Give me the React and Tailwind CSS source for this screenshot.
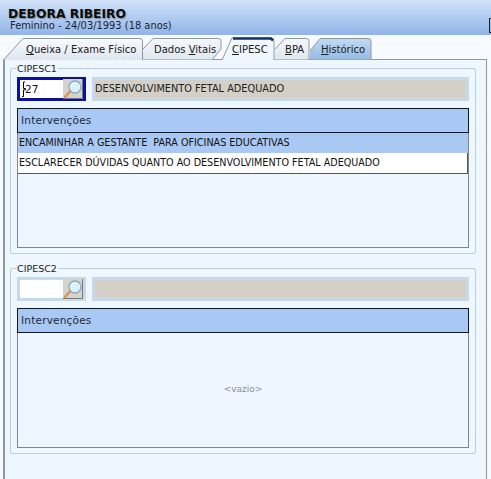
import { useId } from 'react';

const font = { fontFamily: '"DejaVu Sans", Verdana, sans-serif' };

function Tab({ width, path, from, to, active, textClass, children }) {
  const id = useId();
  return (
    <div className={`relative h-[23px] shrink-0 ${width}`}>
      <svg className="absolute inset-0 w-full h-full">
        <defs>
          <linearGradient id={id} x1="0" y1="0" x2="0" y2="1">
            <stop offset="0" stopColor={from} />
            <stop offset="1" stopColor={to} />
          </linearGradient>
        </defs>
        <path d={path} fill={`url(#${id})`} stroke="#8f989f" />
        {active && <path d="M11 1.5 H49 L51 3.5" fill="none" stroke="#12326f" strokeWidth="2.5" />}
      </svg>
      <span className={`absolute top-[6px] text-[10px] leading-[14px] whitespace-nowrap text-[#202020] ${textClass}`}>
        {children}
      </span>
    </div>
  );
}

function Lens() {
  return (
    <svg width="20" height="20" viewBox="0 0 20 20">
      <rect width="20" height="20" fill="#d6d3cb" />
      <path d="M19.5 0 V19.5 H0" fill="none" stroke="#77756f" />
      <path d="M2 18 L7.5 12" stroke="#d99a5a" strokeWidth="2.6" strokeLinecap="round" />
      <circle cx="12" cy="8" r="6" fill="#d8f1fa" stroke="#8fa9b8" strokeWidth="1.3" />
      <path d="M8.5 7 A3.7 3.7 0 0 1 11.5 4" fill="none" stroke="#fff" strokeWidth="1.2" />
    </svg>
  );
}

function Lookup({ focused, code, desc }) {
  return (
    <div className="flex gap-[6px] h-[24px]">
      <div className={`relative flex w-[69px] items-center border-[3px] ${focused ? 'border-[#0b10a0]' : 'border-[#c5d9ea]'} bg-white`}>
        <span className="flex-1 pl-[5px] text-[10.5px] leading-[14px] text-[#111]">{code}</span>
        <Lens />
        {focused && (
          <svg className="absolute left-[1px] top-[1px]" width="6" height="17" viewBox="0 0 6 17">
            <path d="M2.5 1 H4 M2.5 1 V7.5 H4.5 V9 H2.5 V15.5 H1" fill="none" stroke="#000" strokeWidth="1" />
          </svg>
        )}
      </div>
      <div className="flex flex-1 items-center border-[3px] border-[#c5d9ea] bg-[#d4d0c8] text-[9.75px] text-[#202020]">
        {desc}
      </div>
    </div>
  );
}

function Group({ title, className, children }) {
  return (
    <div className={`relative border border-[#b7d0df] rounded-[2px] px-[6px] ${className}`}>
      <span className="absolute left-[5px] top-[-7px] bg-[#eef6ff] px-[1px] text-[9.5px] leading-[13px] text-[#202020]">
        {title}
      </span>
      {children}
    </div>
  );
}

function Table({ children }) {
  return (
    <div className="flex flex-col h-[140px] mt-[7px] border-l border-r border-b border-[#7f868c]">
      <div className="h-[25px] -mx-[1px] flex items-center border border-[#101820] bg-[#a9c8f3] pl-[3px] text-[10.5px] text-[#1c2a3a] tracking-[0.2px]">
        Intervenções
      </div>
      {children}
    </div>
  );
}

export default function App() {
  return (
    <div className="w-[491px] h-[479px] overflow-hidden bg-[#f7fbff] relative" style={font}>
      <div className="relative h-[35px] bg-gradient-to-b from-[#d3e3f9] to-[#8fb4e8] pl-[8px] pt-[7px]">
        <h1 className="text-[12.3px] leading-[14px] font-bold text-[#0a0a0a] [text-shadow:1px_1px_1px_#7f8aa0]">DEBORA RIBEIRO</h1>
        <p className="ml-[2px] -mt-[1px] text-[9.9px] leading-[11px] text-[#1c2430]">Feminino - 24/03/1993 (18 anos)</p>
        <div className="absolute right-0 top-[18px] h-[15px] w-[2px] border border-r-0 border-[#222]" />
      </div>

      <div className="flex pl-[3px] pt-[2px] h-[24px]">
        <Tab width="w-[140px]" path="M0.5 23 L20 1.5 H137 Q139.5 1.5 139.5 4 V23" from="#f8fbfe" to="#dfe6ee" textClass="left-[23px]">
          <u>Q</u>ueixa / Exame Físico
        </Tab>
        <Tab width="w-[79px]" path="M0 12 L10 1.5 H75 Q78 1.5 78 4 V12 L69 23 H0" from="#f5f8fc" to="#dfe6ee" textClass="left-[11px]">
          Dados <u>V</u>itais
        </Tab>
        <Tab width="w-[53px]" active path="M0 23 L10 1 H49 Q52 1 52 4 V23" from="#f4f9ff" to="#eef6ff" textClass="left-[10px]">
          <u>C</u>IPESC
        </Tab>
        <Tab width="w-[35px]" path="M0 12 L10 1.5 H31 Q34 1.5 34 4 V23 H0" from="#f5f8fc" to="#dfe6ee" textClass="left-[10px]">
          <u>B</u>PA
        </Tab>
        <Tab width="w-[62px]" path="M0 14 L10 1.5 H58 Q61 1.5 61 4 V23 H0" from="#c4daf3" to="#92bbe6" textClass="left-[11px]">
          <u>H</u>istórico
        </Tab>
      </div>

      <div className="ml-[3px] mr-[4px] h-[420px] border-l-2 border-t border-r border-[#8f989f] bg-[#eef6ff] pl-[5px] pr-[10px] pt-[8px]">
        <Group title="CIPESC1" className="h-[186px] pt-[8px]">
          <Lookup focused code="27" desc="DESENVOLVIMENTO FETAL ADEQUADO" />
          <Table>
            <div className="h-[20px] flex items-center bg-[#a9c8f3] pl-[1px] text-[9.6px] text-[#111] whitespace-pre">
              ENCAMINHAR A GESTANTE  PARA OFICINAS EDUCATIVAS
            </div>
            <div className="h-[21px] flex items-center bg-white border-b border-r border-[#555] pl-[1px] pt-[1px] text-[9.6px] text-[#111]">
              ESCLARECER DÚVIDAS QUANTO AO DESENVOLVIMENTO FETAL ADEQUADO
            </div>
          </Table>
        </Group>
        <Group title="CIPESC2" className="mt-[14px] h-[186px] pt-[8px]">
          <Lookup desc="" code="" />
          <Table>
            <div className="flex flex-1 items-center justify-center text-[9px] text-[#8a9098]">&lt;vazio&gt;</div>
          </Table>
        </Group>
      </div>
    </div>
  );
}
